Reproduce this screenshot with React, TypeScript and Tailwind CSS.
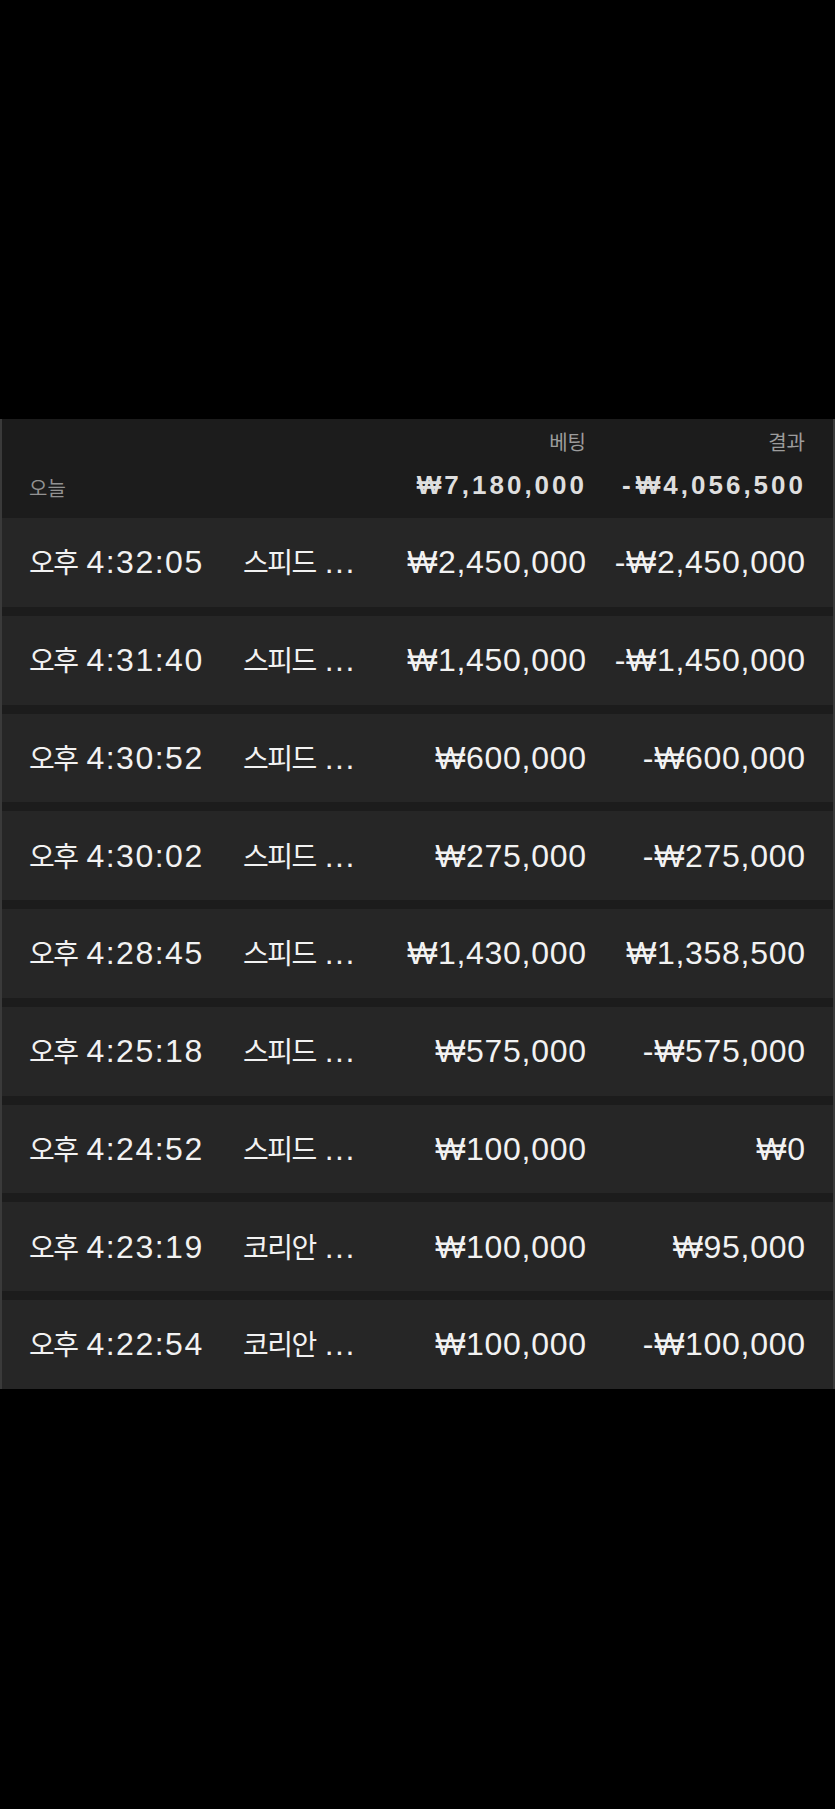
import { FC } from "react";

interface IBetRow {
  time: string;
  game: string;
  bet: string;
  result: string;
}

const rows: IBetRow[] = [
  { time: "4:32:05", game: "스피드", bet: "₩2,450,000", result: "-₩2,450,000" },
  { time: "4:31:40", game: "스피드", bet: "₩1,450,000", result: "-₩1,450,000" },
  { time: "4:30:52", game: "스피드", bet: "₩600,000", result: "-₩600,000" },
  { time: "4:30:02", game: "스피드", bet: "₩275,000", result: "-₩275,000" },
  { time: "4:28:45", game: "스피드", bet: "₩1,430,000", result: "₩1,358,500" },
  { time: "4:25:18", game: "스피드", bet: "₩575,000", result: "-₩575,000" },
  { time: "4:24:52", game: "스피드", bet: "₩100,000", result: "₩0" },
  { time: "4:23:19", game: "코리안", bet: "₩100,000", result: "₩95,000" },
  { time: "4:22:54", game: "코리안", bet: "₩100,000", result: "-₩100,000" },
];

const ko = "text-[28px] tracking-[-1.5px]";

const BetRowItem: FC<{ row: IBetRow }> = ({ row }) => {
  return (
    <div className="grid grid-cols-[214px_121px_222px_219px] items-center h-[88.75px] pl-[27px] pr-[28px] bg-[#262626] text-[32px] leading-none text-[#f2f2f2]">
      <div className="whitespace-nowrap">
        <span className={ko}>오후</span> <span className="tracking-[1.5px]">{row.time}</span>
      </div>
      <div className="whitespace-nowrap">
        <span className={ko}>{row.game}</span> <span className="tracking-[1.5px]">...</span>
      </div>
      <div className="text-right whitespace-nowrap tracking-[0.7px] mr-[-0.7px]">{row.bet}</div>
      <div className="text-right whitespace-nowrap tracking-[0.7px] mr-[-0.7px]">{row.result}</div>
    </div>
  );
};

export default function App() {
  return (
    <div className="min-h-[1809px] bg-black font-['Liberation_Sans','Noto_Sans_CJK_KR',sans-serif]">
      <div className="h-[419px]" />
      <div className="flex flex-col gap-[9px] bg-[#1c1c1c] border-x-2 border-[#3a3a3a]">
        {/* 합계 헤더 */}
        <div className="h-[90px] pt-[12px] pl-[27px] pr-[28px]">
          <div className="grid grid-cols-[214px_121px_222px_219px] text-[20px] leading-[24px] text-[#9c9c9c]">
            <div />
            <div />
            <div className="text-right">베팅</div>
            <div className="text-right">결과</div>
          </div>
          <div className="grid grid-cols-[214px_121px_222px_219px] items-end mt-[14px]">
            <div className="text-[20px] leading-[24px] text-[#929292]">오늘</div>
            <div />
            <div className="text-right text-[26px] leading-[32px] font-bold tracking-[3px] text-[#dedede] whitespace-nowrap mr-[-1px]">
              ₩7,180,000
            </div>
            <div className="text-right text-[26px] leading-[32px] font-bold tracking-[3px] text-[#dedede] whitespace-nowrap mr-[-1px]">
              <span className="mr-[2px]">-</span>₩4,056,500
            </div>
          </div>
        </div>

        {rows.map((row) => (
          <BetRowItem key={row.time} row={row} />
        ))}
      </div>
    </div>
  );
}
